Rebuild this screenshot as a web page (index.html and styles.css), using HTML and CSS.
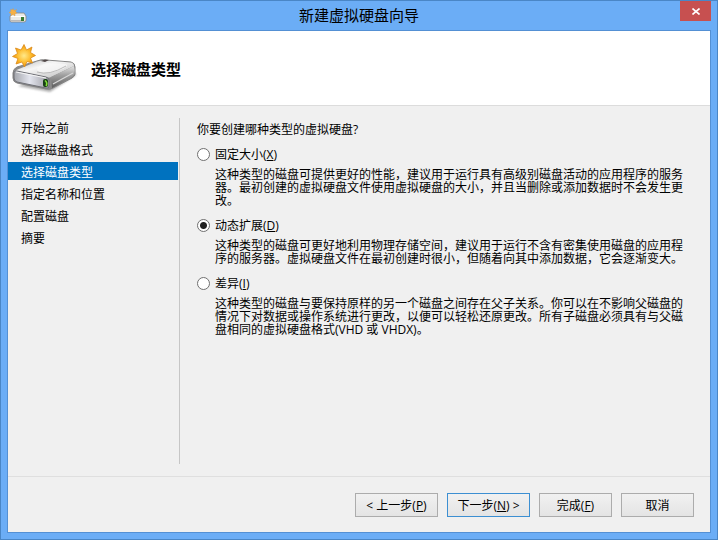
FILE: index.html
```html
<!DOCTYPE html>
<html lang="zh-CN">
<head>
<meta charset="utf-8">
<meta name="viewport" content="width=device-width, initial-scale=1">
<title>新建虚拟硬盘向导</title>
<link rel="stylesheet" href="styles.css">
</head>
<body>
<svg class="defs" aria-hidden="true">
  <defs>
    <linearGradient id="top" x1="0" y1="0" x2="1" y2="1">
      <stop offset="0" stop-color="#b9b9b9"/><stop offset=".4" stop-color="#f6f6f6"/><stop offset="1" stop-color="#bdbdbd"/>
    </linearGradient>
    <linearGradient id="front" x1="0" y1="0" x2="1" y2="0">
      <stop offset="0" stop-color="#a4a6ac"/><stop offset=".45" stop-color="#e3e5ee"/><stop offset="1" stop-color="#9c9ca2"/>
    </linearGradient>
    <linearGradient id="side" x1="0" y1="0" x2="0" y2="1">
      <stop offset="0" stop-color="#e4e4e4"/><stop offset=".4" stop-color="#a2a2a2"/><stop offset="1" stop-color="#5c5c5c"/>
    </linearGradient>
    <radialGradient id="sun">
      <stop offset="0" stop-color="#ffe98a"/><stop offset=".6" stop-color="#fdbb2c"/><stop offset="1" stop-color="#ee9413"/>
    </radialGradient>
    <filter id="soft" x="-20%" y="-50%" width="140%" height="200%"><feGaussianBlur stdDeviation="1"/></filter>
    <symbol id="drive" viewBox="0 0 66 50">
      <path d="M6 42 38 48 64 31 60 24Z" fill="#777" opacity=".6" filter="url(#soft)"/>
      <path d="M1 29Q1 25 5 23L25 17Q29 15 34 16L59 18Q63 19 63 23L63 30Q63 32 60 34L41 44Q38 46 34 45L5 39Q1 38 1 34Z" fill="#8a8a8a" stroke="#858585"/>
      <path d="M2 27 25 17.500Q29 16 34 16.500L59 18.500Q62 19 62 22L39 33Q37 34 34 33L5 28Z" fill="url(#top)"/>
      <path d="M25 26Q25 22 35 19L54 20Q58 22 48 26 38 30 28 28Z" fill="#fafafa" opacity=".7"/>
      <path d="M25 28Q37 32 54 22" fill="none" stroke="#bbb"/>
      <path d="m29 17 4-1.500 4 .5-4 2Z" fill="#514747"/>
      <path d="M39 33 62 22Q63 25 62.500 30L60 33 40 44Z" fill="url(#side)"/>
      <path d="m41 40 20-11" stroke="#d8d8d8" stroke-width="1.200"/>
      <path d="M2 28Q2 26 5 27L34 33Q37 34 37 36L37 42Q37 45 34 44L5 38Q2 37 2 34Z" fill="url(#front)" stroke="#707177"/>
      <path d="M4 28 34 34" stroke="#f4f4f4"/>
      <rect x="31" y="35" width="5" height="8" rx="2" fill="#173f16"/>
      <path d="M33 36.500Q36 39 34 42" fill="none" stroke="#82de36" stroke-width="1.600"/>
      <path d="M12 .5 14.500 6 20 3 18.500 8.500 23.500 11.500 18.500 14 20.500 19 15 17.500 12.500 23 10 18 4 20 6 14.500 .5 12.500 5.500 9.500 3.500 4 9 6Z" fill="url(#sun)" stroke="#dc8b18" stroke-width=".8"/>
    </symbol>
    <symbol id="drive-small" viewBox="0 0 18 15">
      <path d="M1 8 5 5H15L17 8V12Q17 14 15 14H2Q1 14 1 12Z" fill="#e9e9e6" stroke="#8a8783" stroke-width=".8"/>
      <path d="M2 8.500H16" stroke="#fff"/>
      <path d="M2 12.500H15" stroke="#b9b9b9"/>
      <rect x="12" y="9" width="3" height="4" fill="#397c32"/>
      <path d="m4 .5 1 2 2.500-1-1 2L8 5 6 5.500 6 8 4 6.500 2 7.500 2 5.500 0 4.500 2 3.500 1.500 1.500 3.500 2Z" fill="#f6b044" stroke="#d99a49" stroke-width=".4"/>
    </symbol>
  </defs>
</svg>

<div class="window">
  <header class="titlebar">
    <svg class="titlebar-icon" aria-hidden="true"><use href="#drive-small"/></svg>
    <span class="titlebar-text">新建虚拟硬盘向导</span>
    <button class="close" type="button" aria-label="关闭">
      <svg class="close-icon" viewBox="0 0 8 7" aria-hidden="true"><path d="M.5.5 7.500 6.500M7.500.5.5 6.500"/></svg>
    </button>
  </header>

  <form class="client">
    <div class="banner">
      <svg class="banner-icon" aria-hidden="true"><use href="#drive"/></svg>
      <h1 class="banner-title">选择磁盘类型</h1>
    </div>

    <div class="body">
      <nav class="steps">
        <a class="step" href="#">开始之前</a>
        <a class="step" href="#">选择磁盘格式</a>
        <a class="step step-current" href="#" aria-current="step">选择磁盘类型</a>
        <a class="step" href="#">指定名称和位置</a>
        <a class="step" href="#">配置磁盘</a>
        <a class="step" href="#">摘要</a>
      </nav>

      <div class="page">
        <fieldset class="options">
          <legend class="question">你要创建哪种类型的虚拟硬盘?</legend>
          <div class="option">
            <input class="radio" type="radio" name="type" id="fixed" aria-describedby="fixed-text">
            <label class="option-label" for="fixed">固定大小(<u>X</u>)</label>
            <p class="option-text" id="fixed-text">这种类型的磁盘可提供更好的性能，建议用于运行具有高级别磁盘活动的应用程序的服务器。最初创建的虚拟硬盘文件使用虚拟硬盘的大小，并且当删除或添加数据时不会发生更改。</p>
          </div>
          <div class="option">
            <input class="radio" type="radio" name="type" id="dynamic" aria-describedby="dynamic-text" checked>
            <label class="option-label" for="dynamic">动态扩展(<u>D</u>)</label>
            <p class="option-text" id="dynamic-text">这种类型的磁盘可更好地利用物理存储空间，建议用于运行不含有密集使用磁盘的应用程序的服务器。虚拟硬盘文件在最初创建时很小，但随着向其中添加数据，它会逐渐变大。</p>
          </div>
          <div class="option">
            <input class="radio" type="radio" name="type" id="diff" aria-describedby="diff-text">
            <label class="option-label" for="diff">差异(<u>I</u>)</label>
            <p class="option-text" id="diff-text">这种类型的磁盘与要保持原样的另一个磁盘之间存在父子关系。你可以在不影响父磁盘的情况下对数据或操作系统进行更改，以便可以轻松还原更改。所有子磁盘必须具有与父磁盘相同的虚拟硬盘格式(VHD 或 VHDX)。</p>
          </div>
        </fieldset>
      </div>
    </div>

    <footer class="actions">
      <button class="button button-wide" type="button">&lt; 上一步(<u>P</u>)</button>
      <button class="button button-wide button-default" type="submit">下一步(<u>N</u>) &gt;</button>
      <button class="button" type="button">完成(<u>F</u>)</button>
      <button class="button" type="button">取消</button>
    </footer>
  </form>
</div>
</body>
</html>
```

FILE: styles.css
```css
* {
  box-sizing: border-box;
}

body {
  margin: 0;
  color: #000;
  font: 12px/18px "Open Sans", "Noto Sans CJK SC", sans-serif;
  text-spacing-trim: space-all;
}

.defs {
  position: absolute;
  width: 0;
  height: 0;
}

.window {
  display: flex;
  flex-direction: column;
  min-height: 100vh;
  padding: 0 6px 6px;
  border: 1px solid #4a86c6;
  background: #6badf6;
}

.titlebar {
  display: grid;
  grid-template-columns: 1fr auto 1fr;
  height: 29px;
}

.titlebar-icon {
  width: 18px;
  height: 15px;
  margin: 7px 0 0 2px;
}

.titlebar-text {
  font-size: 15px;
  line-height: 29px;
}

.close {
  justify-self: end;
  display: grid;
  place-items: center;
  width: 31px;
  height: 20px;
  padding: 0;
  border: 0;
  background: #c75050;
}

.close-icon {
  width: 8px;
  height: 7px;
  fill: none;
  stroke: #fff;
  stroke-width: 1.6;
}

.client {
  flex: 1;
  display: flex;
  flex-direction: column;
  border: 1px solid #5490d4;
  background: #f0f0f0;
}

.banner {
  display: flex;
  align-items: center;
  gap: 13px;
  height: 75px;
  padding: 2px 0 0 4px;
  border-bottom: 1px solid #dcdcdc;
  background: #fff;
}

.banner-icon {
  width: 66px;
  height: 50px;
}

.banner-title {
  margin: 0;
  font-size: 15px;
  font-weight: 700;
}

.body {
  flex: 1;
  display: flex;
  gap: 1px;
  padding: 12px 16px 12px 0;
}

.steps {
  flex: none;
  display: flex;
  flex-direction: column;
  gap: 4px;
  width: 170px;
}

.step {
  padding: 4px 0 0 13px;
  color: #000;
  line-height: 14px;
  text-decoration: none;
}

.step-current {
  background: #0072bf;
  color: #fff;
}

.page {
  flex: 1;
  min-width: 0;
  padding: 3px 0 0 17px;
  border-left: 1px solid #c6c6c6;
}

.options {
  min-width: 0;
  margin: 0;
  padding: 0;
  border: 0;
}

.question {
  padding: 0;
  margin-bottom: 6px;
}

.option {
  display: grid;
  grid-template-columns: 13px 1fr;
  column-gap: 5px;
  row-gap: 5px;
  align-items: center;
}

.option + .option {
  margin-top: 9px;
}

.option-label {
  justify-self: start;
  padding-top: 2px;
  line-height: 16px;
}

.option-text {
  grid-column: 2;
  margin: 0;
  line-height: 13px;
}

.radio {
  appearance: none;
  width: 13px;
  height: 13px;
  margin: 0;
  border: 1px solid #707070;
  border-radius: 50%;
  background: #fff;
}

.radio:checked {
  background: radial-gradient(circle, #212121 3px, #fff 4px);
}

.actions {
  display: flex;
  justify-content: flex-end;
  gap: 9px;
  padding: 16px 16px 15px;
  border-top: 1px solid #dfdfdf;
}

.button {
  width: 73px;
  height: 24px;
  padding: 2px 0 0;
  border: 1px solid #acacac;
  background: linear-gradient(#f1f1f1, #e4e4e4);
  color: #000;
  font: inherit;
  line-height: 20px;
}

.button-wide {
  width: 83px;
}

.button-default {
  border-color: #3c8fd2;
}
```
